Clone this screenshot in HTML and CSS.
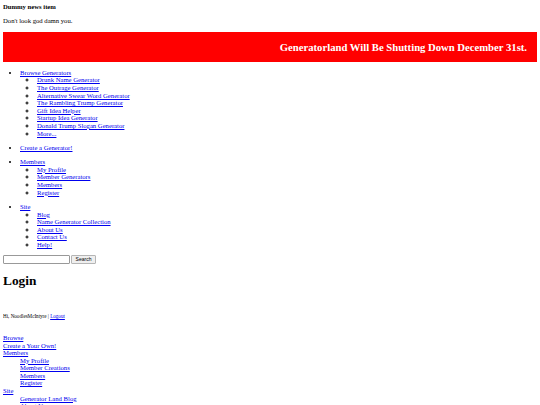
FILE: index.html
```html
<!DOCTYPE html>
<html>
<head>
<meta charset="utf-8">
<title>Login</title>
<link rel="stylesheet" href="styles.css">
</head>
<body>
<div class="news">
  <h4 class="news-title">Dummy news item</h4>
  <p class="news-body">Don't look god damn you.</p>
</div>
<div class="banner">Generatorland Will Be Shutting Down December 31st.</div>

<ul class="nav">
  <li><a href="#">Browse Generators</a>
    <ul class="sub">
      <li><a href="#">Drunk Name Generator</a></li>
      <li><a href="#">The Outrage Generator</a></li>
      <li><a href="#">Alternative Swear Word Generator</a></li>
      <li><a href="#">The Rambling Trump Generator</a></li>
      <li><a href="#">Gift Idea Helper</a></li>
      <li><a href="#">Startup Idea Generator</a></li>
      <li><a href="#">Donald Trump Slogan Generator</a></li>
      <li><a href="#">More...</a></li>
    </ul>
  </li>
</ul>
<ul class="nav">
  <li><a href="#">Create a Generator!</a></li>
</ul>
<ul class="nav">
  <li><a href="#">Members</a>
    <ul class="sub">
      <li><a href="#">My Profile</a></li>
      <li><a href="#">Member Generators</a></li>
      <li><a href="#">Members</a></li>
      <li><a href="#">Register</a></li>
    </ul>
  </li>
</ul>
<ul class="nav">
  <li><a href="#">Site</a>
    <ul class="sub">
      <li><a href="#">Blog</a></li>
      <li><a href="#">Name Generator Collection</a></li>
      <li><a href="#">About Us</a></li>
      <li><a href="#">Contact Us</a></li>
      <li><a href="#">Help!</a></li>
    </ul>
  </li>
</ul>

<form class="search">
  <input class="search-input" type="text">
  <button class="search-btn" type="button">Search</button>
</form>

<h1 class="title">Login</h1>

<p class="greet">Hi, NoodlesMcIntyre | <a href="#">Logout</a></p>

<ul class="menu">
  <li><a href="#">Browse</a></li>
  <li><a href="#">Create a Your Own!</a></li>
  <li><a href="#">Members</a>
    <ul class="menu-sub">
      <li><a href="#">My Profile</a></li>
      <li><a href="#">Member Creations</a></li>
      <li><a href="#">Members</a></li>
      <li><a href="#">Register</a></li>
    </ul>
  </li>
  <li><a href="#">Site</a>
    <ul class="menu-sub">
      <li><a href="#">Generator Land Blog</a></li>
      <li><a href="#">About Us</a></li>
      <li><a href="#">Contact Us</a></li>
      <li><a href="#">Help!</a></li>
    </ul>
  </li>
</ul>
</body>
</html>
```

FILE: styles.css
```css
html, body {
  background: #ffffff;
}
body {
  margin: 3px;
  font-family: "Liberation Serif", "Times New Roman", serif;
  font-size: 6.67px;
  line-height: 7.6px;
  color: #000000;
}
a {
  color: #0000ee;
  text-decoration: underline;
}
.news-title {
  margin: 0;
  font-size: 1em;
  font-weight: bold;
}
.news-body {
  margin: 6.6px 0 7.2px 0;
}
.banner {
  background: #ff0000;
  color: #ffffff;
  font-weight: bold;
  font-size: 10.67px;
  line-height: 12px;
  text-align: right;
  padding: 9px 10px;
}
.nav {
  margin: 6.8px 0;
  padding-left: 17px;
  list-style: disc;
}
.sub {
  margin: 0;
  padding-left: 17px;
  list-style: circle;
}
.search {
  display: flex;
  align-items: stretch;
  gap: 1px;
  margin: 0;
}
.search-input {
  width: 67px;
  height: 9px;
  box-sizing: border-box;
  margin: 0;
  padding: 0 2px;
  border: 1px solid #999999;
  border-radius: 1px;
  background: #ffffff;
  font-size: 6px;
}
.search-btn {
  width: 25px;
  height: 9px;
  box-sizing: border-box;
  margin: 0;
  padding: 0;
  border: 1px solid #b5b5b5;
  border-radius: 1px;
  background: #efefef;
  font-family: "Liberation Sans", Arial, sans-serif;
  font-size: 5px;
  line-height: 7px;
  color: #000000;
}
.title {
  font-size: 13.33px;
  line-height: 15px;
  font-weight: bold;
  margin: 9px 0;
}
.greet {
  font-size: 5.1px;
  line-height: 6px;
  margin: 24.5px 0 0 0;
}
.menu {
  list-style: none;
  margin: 15px 0 0 0;
  padding: 0;
}
.menu-sub {
  list-style: none;
  margin: 0;
  padding-left: 17px;
}
```
